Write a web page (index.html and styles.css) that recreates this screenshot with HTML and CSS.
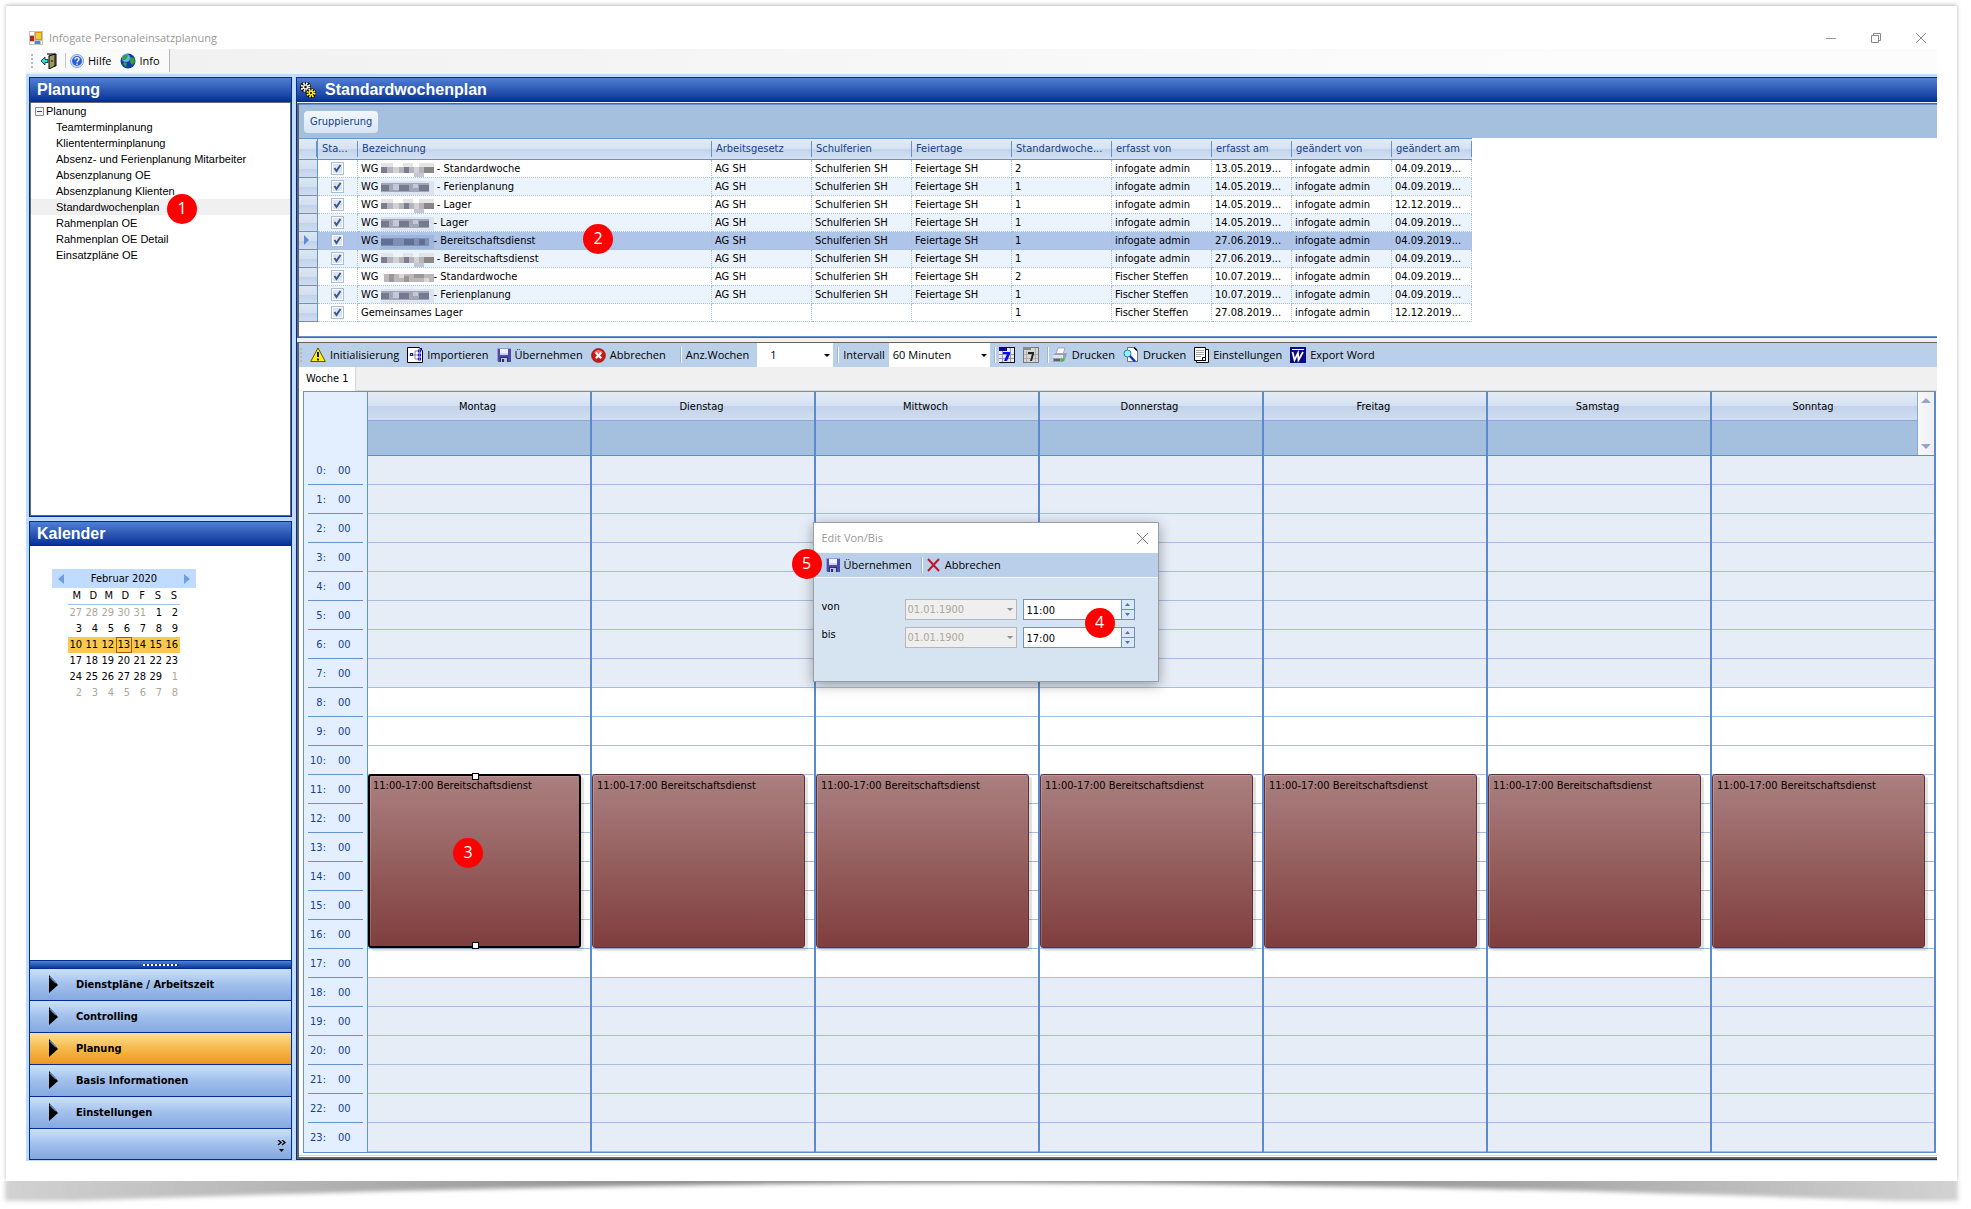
FILE: index.html
```html
<!DOCTYPE html>
<html lang="de">
<head>
<meta charset="utf-8">
<title>Infogate Personaleinsatzplanung</title>
<link rel="stylesheet" href="styles.css">
</head>
<body>
<svg class="defs" aria-hidden="true">
  <symbol id="i-save" viewBox="0 0 14 14"><path d="M0 0h14v14H1.500L0 12.500z" fill="#4a4aa8"/><path d="M0 0h14v1H1v12H0z" fill="#9a9ade"/><path d="M3 1h8v6H3z" fill="#eef2ff"/><path d="M3 5h8v2H3z" fill="#cdd4f2"/><path d="M3 9h8v5H3z" fill="#30306e"/><path d="M4 10h6v4H4z" fill="#b9c0de"/><path d="M5 11h2v3H5z" fill="#2c2c60"/></symbol>
  <symbol id="i-arrow" viewBox="0 0 11 18"><path d="M1 0v18l9-8z" fill="#000"/><path d="M2 2l6 6" stroke="#5b86b5" stroke-width="1.500"/></symbol>
  <symbol id="m-a" viewBox="0 0 53 14"><g fill="#e4e4e6"><path d="M0 0h12v4H0zM22 0h10v4H22zM38 0h15v4H38z"/></g><path d="M0 4h53v6H0z" fill="#b4b4ba"/><path d="M0 4h6v6H0zM23 4h5v6h-5z" fill="#7d7d92"/><path d="M12 4h6v6h-6zM33 4h5v6h-5z" fill="#d2d2d2"/><path d="M43 4h10v6H43z" fill="#8a8686"/><path d="M33 10h10v4H33z" fill="#c4c6d4"/></symbol>
  <symbol id="m-b" viewBox="0 0 53 14"><path d="M0 0h53v14H0z" fill="#d5dbe6" opacity=".6"/><path d="M0 2h48v9H0z" fill="#a3a6b6"/><path d="M0 4h8v6H0zM18 4h10v6H18zM38 4h10v6H38z" fill="#747a90"/><path d="M12 3h6v6h-6zM32 3h5v4h-5z" fill="#c3c9d8"/></symbol>
  <symbol id="m-c" viewBox="0 0 53 14"><path d="M3 3h50v8H3z" fill="#bab8b8"/><path d="M8 3h5v8H8zM23 5h5v6h-5zM33 3h10v4H33z" fill="#9a9896"/><path d="M18 3h5v4h-5zM43 7h5v4h-5z" fill="#d8d8d8"/></symbol>
  <symbol id="m-d" viewBox="0 0 53 14"><path d="M0 0h53v14H0z" fill="#95abd0" opacity=".6"/><path d="M0 3h48v8H0z" fill="#7d90b4"/><path d="M0 4h12v6H0zM23 4h10v6H23zM38 4h6v6h-6z" fill="#5f7094"/></symbol>
</svg>

<div class="sheet">
  <header class="titlebar">
    <svg width="14" height="14" viewBox="0 0 14 14"><path d="M0 0h14v14H0z" fill="#c4c4c4"/><path d="M1 1h4v3H1zM1 11h4v2H1zM12 10h1v3h-1z" fill="#fff"/><path d="M1 5h4v5H1z" fill="#b02a1c"/><path d="M6 1h7v8H6z" fill="#d99a08"/><path d="M7 2h5v6H7z" fill="#f7c93c"/><path d="M6 10h5v3H6z" fill="#4d86e0"/></svg>
    <h1>Infogate Personaleinsatzplanung</h1>
    <div class="winbtns">
      <button aria-label="Minimieren"><svg width="10" height="10"><path d="M0 5.500h10" stroke="#999"/></svg></button>
      <button aria-label="Wiederherstellen"><svg width="10" height="10" fill="none" stroke="#888"><path d="M.5 2.500h7v7h-7zM2.500 2V.5h7v7H8"/></svg></button>
      <button aria-label="Schliessen"><svg width="10" height="10"><path d="M0 0l10 10M10 0L0 10" stroke="#888"/></svg></button>
    </div>
  </header>

  <nav class="menubar">
    <div class="menu">
      <span class="grip"></span>
      <button aria-label="Beenden"><svg width="16" height="16" viewBox="0 0 16 16"><path d="M6 1h9v12h-2" fill="#c9c9c9" stroke="#000"/><path d="M8 3l6-2v12l-6 3z" fill="#a09a62" stroke="#000"/><path d="M11 7v2" stroke="#000"/><path d="M0 8l4-4v2.500h3v3H4V12z" fill="#2ee0e0" stroke="#000" stroke-width=".7"/></svg></button>
      <span class="sep"></span>
      <button><svg width="14" height="14" viewBox="0 0 14 14"><circle cx="7" cy="7" r="6.500" fill="#dfe8fb" stroke="#7e9ce0"/><circle cx="7" cy="7" r="5" fill="#2b5fd6"/><path d="M5 5.500c0-2.600 4-2.400 4-.2C9 6.800 7 6.700 7 8.500M7 9.500V11" fill="none" stroke="#fff" stroke-width="1.300"/></svg>Hilfe</button>
      <button><svg width="16" height="16" viewBox="0 0 16 16"><circle cx="8" cy="8" r="7.500" fill="#0e3fa4"/><circle cx="6" cy="5" r="4" fill="#5fb4f2"/><path d="M2 5c1-3 4-4 6-3L7 5 5 7 3 7zM10 4l4 1 1 4-3 3-2-3zM4 9l3 1-1 4-3-3z" fill="#3d9c3a"/></svg>Info</button>
    </div>
  </nav>

  <div class="frame">
    <aside class="sidebar">
      <section class="panel tree-panel">
        <h2>Planung</h2>
        <div class="tree">
          <div class="root"><svg width="9" height="9"><path d="M.5.5h8v8h-8z" fill="#f4f4f4" stroke="#8a8a8a"/><path d="M2 4.500h5" stroke="#2b4a9c"/></svg>Planung</div>
          <ul>
            <li><a href="#">Teamterminplanung</a></li>
            <li><a href="#">Kliententerminplanung</a></li>
            <li><a href="#">Absenz- und Ferienplanung Mitarbeiter</a></li>
            <li><a href="#">Absenzplanung OE</a></li>
            <li><a href="#">Absenzplanung Klienten</a></li>
            <li class="current"><a href="#">Standardwochenplan</a><span class="badge b1">1</span></li>
            <li><a href="#">Rahmenplan OE</a></li>
            <li><a href="#">Rahmenplan OE Detail</a></li>
            <li><a href="#">Einsatzpläne OE</a></li>
          </ul>
        </div>
      </section>

      <section class="panel cal-panel">
        <h2>Kalender</h2>
        <div class="month">
          <div class="month-head"><button aria-label="Voriger Monat"><svg width="6" height="10"><path d="M6 0v10L0 5z" fill="#6f9fdc"/></svg></button><span>Februar 2020</span><button aria-label="Nächster Monat"><svg width="6" height="10"><path d="M0 0v10l6-5z" fill="#6f9fdc"/></svg></button></div>
          <table>
            <thead><tr><th>M</th><th>D</th><th>M</th><th>D</th><th>F</th><th>S</th><th>S</th></tr></thead>
            <tbody>
              <tr><td class="o">27</td><td class="o">28</td><td class="o">29</td><td class="o">30</td><td class="o">31</td><td>1</td><td>2</td></tr>
              <tr><td>3</td><td>4</td><td>5</td><td>6</td><td>7</td><td>8</td><td>9</td></tr>
              <tr class="week"><td>10</td><td>11</td><td>12</td><td class="today">13</td><td>14</td><td>15</td><td>16</td></tr>
              <tr><td>17</td><td>18</td><td>19</td><td>20</td><td>21</td><td>22</td><td>23</td></tr>
              <tr><td>24</td><td>25</td><td>26</td><td>27</td><td>28</td><td>29</td><td class="o">1</td></tr>
              <tr><td class="o">2</td><td class="o">3</td><td class="o">4</td><td class="o">5</td><td class="o">6</td><td class="o">7</td><td class="o">8</td></tr>
            </tbody>
          </table>
        </div>
      </section>

      <div class="splitter"><span></span></div>
      <nav class="groups">
        <button><svg width="11" height="18"><use href="#i-arrow"/></svg>Dienstpläne / Arbeitszeit</button>
        <button><svg width="11" height="18"><use href="#i-arrow"/></svg>Controlling</button>
        <button class="active"><svg width="11" height="18"><use href="#i-arrow"/></svg>Planung</button>
        <button><svg width="11" height="18"><use href="#i-arrow"/></svg>Basis Informationen</button>
        <button><svg width="11" height="18"><use href="#i-arrow"/></svg>Einstellungen</button>
        <div class="overflow"><button aria-label="Weitere"><svg width="9" height="13" viewBox="0 0 9 13"><path d="M1 0l3 2.500L1 5M5 0l3 2.500L5 5" fill="none" stroke="#000" stroke-width="1.400"/><path d="M2 9h5l-2.500 3z"/></svg></button></div>
      </nav>
    </aside>

    <main>
      <h2 class="main-title"><svg width="16" height="16" viewBox="0 0 16 16"><circle cx="5.500" cy="5" r="4" fill="none" stroke="#000" stroke-width="3"/><circle cx="5.500" cy="5" r="3.600" fill="none" stroke="#f2f2e6" stroke-width="2.600" stroke-dasharray="1.700 1.130"/><circle cx="5.500" cy="5" r="2.600" fill="#f2f2e6"/><circle cx="5.500" cy="5" r="1.200"/><circle cx="11" cy="11" r="3.600" fill="none" stroke="#000" stroke-width="3"/><circle cx="11" cy="11" r="3.300" fill="none" stroke="#ffee20" stroke-width="2.600" stroke-dasharray="1.500 1.090"/><circle cx="11" cy="11" r="2.400" fill="#ffee20"/><circle cx="11" cy="11" r="1.100"/></svg>Standardwochenplan</h2>

      <section class="plans">
        <div class="groupbar"><button>Gruppierung</button></div>
        <table class="grid">
          <colgroup><col class="w20"><col class="w40"><col class="w354"><col class="w100"><col class="w100"><col class="w100"><col class="w100"><col class="w100"><col class="w80"><col class="w100"><col class="w80"></colgroup>
          <thead><tr><th></th><th>Sta...</th><th>Bezeichnung</th><th>Arbeitsgesetz</th><th>Schulferien</th><th>Feiertage</th><th>Standardwoche...</th><th>erfasst von</th><th>erfasst am</th><th>geändert von</th><th>geändert am</th></tr></thead>
          <tbody>
            <tr><td></td><td><input type="checkbox" checked aria-label="Aktiv"></td><td>WG <svg width="53" height="14"><use href="#m-a"/></svg> - Standardwoche</td><td>AG SH</td><td>Schulferien SH</td><td>Feiertage SH</td><td>2</td><td>infogate admin</td><td>13.05.2019...</td><td>infogate admin</td><td>04.09.2019...</td></tr>
            <tr><td></td><td><input type="checkbox" checked aria-label="Aktiv"></td><td>WG <svg width="53" height="14"><use href="#m-b"/></svg> - Ferienplanung</td><td>AG SH</td><td>Schulferien SH</td><td>Feiertage SH</td><td>1</td><td>infogate admin</td><td>14.05.2019...</td><td>infogate admin</td><td>04.09.2019...</td></tr>
            <tr><td></td><td><input type="checkbox" checked aria-label="Aktiv"></td><td>WG <svg width="53" height="14"><use href="#m-a"/></svg> - Lager</td><td>AG SH</td><td>Schulferien SH</td><td>Feiertage SH</td><td>1</td><td>infogate admin</td><td>14.05.2019...</td><td>infogate admin</td><td>12.12.2019...</td></tr>
            <tr><td></td><td><input type="checkbox" checked aria-label="Aktiv"></td><td>WG <svg width="53" height="14"><use href="#m-b"/></svg>- Lager</td><td>AG SH</td><td>Schulferien SH</td><td>Feiertage SH</td><td>1</td><td>infogate admin</td><td>14.05.2019...</td><td>infogate admin</td><td>04.09.2019...</td></tr>
            <tr class="sel"><td><svg width="5" height="10"><path d="M0 0v10l5-5z" fill="#5a8fd8"/></svg></td><td><input type="checkbox" checked aria-label="Aktiv"></td><td>WG <svg width="53" height="14"><use href="#m-d"/></svg>- Bereitschaftsdienst<span class="badge b2">2</span></td><td>AG SH</td><td>Schulferien SH</td><td>Feiertage SH</td><td>1</td><td>infogate admin</td><td>27.06.2019...</td><td>infogate admin</td><td>04.09.2019...</td></tr>
            <tr><td></td><td><input type="checkbox" checked aria-label="Aktiv"></td><td>WG <svg width="53" height="14"><use href="#m-a"/></svg> - Bereitschaftsdienst</td><td>AG SH</td><td>Schulferien SH</td><td>Feiertage SH</td><td>1</td><td>infogate admin</td><td>27.06.2019...</td><td>infogate admin</td><td>04.09.2019...</td></tr>
            <tr><td></td><td><input type="checkbox" checked aria-label="Aktiv"></td><td>WG <svg width="53" height="14"><use href="#m-c"/></svg>- Standardwoche</td><td>AG SH</td><td>Schulferien SH</td><td>Feiertage SH</td><td>2</td><td>Fischer Steffen</td><td>10.07.2019...</td><td>infogate admin</td><td>04.09.2019...</td></tr>
            <tr><td></td><td><input type="checkbox" checked aria-label="Aktiv"></td><td>WG <svg width="53" height="14"><use href="#m-b"/></svg>- Ferienplanung</td><td>AG SH</td><td>Schulferien SH</td><td>Feiertage SH</td><td>1</td><td>Fischer Steffen</td><td>10.07.2019...</td><td>infogate admin</td><td>04.09.2019...</td></tr>
            <tr><td></td><td><input type="checkbox" checked aria-label="Aktiv"></td><td>Gemeinsames Lager</td><td></td><td></td><td></td><td>1</td><td>Fischer Steffen</td><td>27.08.2019...</td><td>infogate admin</td><td>12.12.2019...</td></tr>
          </tbody>
        </table>
      </section>

      <section class="editor">
        <div class="toolbar">
          <span class="grip"></span>
          <button><svg width="16" height="16" viewBox="0 0 16 16"><path d="M8 1L15.300 14.500H.7z" fill="#ffee10" stroke="#5c5600" stroke-linejoin="round"/><path d="M8 5v5M8 11.500v2" stroke="#000" stroke-width="1.800"/></svg>Initialisierung</button>
          <button><svg width="16" height="16" viewBox="0 0 16 16"><path d="M.5.5h12l3 3v12H.5z" fill="#fff" stroke="#000"/><path d="M12 1l3 3v-3z" fill="#000"/><path d="M6 8h5M8 4h3M8 12h3M8 4v8" stroke="#888" fill="none"/><path d="M3.500 6.500h2v2h-2zM11.500 3h2v2h-2zM11.500 7h2v2h-2zM11.500 11h2v2h-2z" fill="#fff" stroke="#1414e0" stroke-width="1.200"/></svg>Importieren</button>
          <button><svg width="14" height="14"><use href="#i-save"/></svg>Übernehmen</button>
          <button><svg width="15" height="15" viewBox="0 0 15 15"><circle cx="7.500" cy="7.500" r="7" fill="#c81a14" stroke="#8c100c" stroke-width=".6"/><path d="M3 5c2-4 7-4 9 0" fill="#ea7268"/><path d="M4.800 4.800l5.400 5.400M10.200 4.800l-5.400 5.400" stroke="#fff" stroke-width="2.200"/></svg>Abbrechen</button>
          <span class="sep wide"></span>
          <label for="weeks">Anz.Wochen</label>
          <span class="combo weeks"><select id="weeks"><option>1</option></select></span>
          <span class="sep"></span>
          <label for="interval">Intervall</label>
          <span class="combo interval"><select id="interval"><option>60 Minuten</option></select></span>
          <span class="sep"></span>
          <button aria-label="Wochenansicht"><svg width="16" height="16" viewBox="0 0 16 16"><path d="M0 0h16v16H0z" fill="#111"/><path d="M0 1h15v14H0z" fill="#e8e8f0"/><path d="M0 1h8v3H0z" fill="#0a0a90"/><path d="M0 7.500h15M0 11.500h15M3.500 4v11M11.500 1v14" stroke="#9a9aa4"/><path d="M4 5h7v2L8 14H5l3-7H4z" fill="#0c0cf0"/></svg></button>
          <button aria-label="Tagesansicht"><svg width="16" height="16" viewBox="0 0 16 16"><path d="M0 0h16v16H0z" fill="#777"/><path d="M1 1h14v14H1z" fill="#d6d6d2"/><path d="M0 0h8v3H0z" fill="#8a8a8a"/><path d="M1 7.500h14M1 11.500h14M3.500 4v11M12.500 1v14" stroke="#b0b0ae"/><path d="M5 5h6v2l-2 7H7l2-7H5z" fill="#222"/></svg></button>
          <span class="sep"></span>
          <button><svg width="16" height="16" viewBox="0 0 16 16"><path d="M6 1h7l-2 6H4z" fill="#fff" stroke="#8a94a8" stroke-width=".7"/><path d="M1 8l3-2h11l-2 7-2 2H1z" fill="#9aa0ae"/><path d="M1 8h10v3H1z" fill="#dfe3ea"/><path d="M2 12h6v2H2z" fill="#5a5f6c"/><path d="M9 12h3v2H9z" fill="#2cc82c"/></svg>Drucken</button>
          <button><svg width="16" height="16" viewBox="0 0 16 16"><path d="M4.500.5h7l3 3v11h-10z" fill="#fff" stroke="#555" stroke-width=".8"/><path d="M11 .5l3 3" stroke="#000" stroke-width="1.500"/><circle cx="4.500" cy="6.500" r="3.500" fill="#8ef2f6" stroke="#2a7f94"/><path d="M7 9l5 5.500" stroke="#0e2fd0" stroke-width="2.600"/></svg>Drucken</button>
          <button><svg width="15" height="16" viewBox="0 0 15 16"><path d="M2.500 2.500h12v13h-12z" fill="#fff" stroke="#000"/><path d="M.5.5h11v13H.5z" fill="#fff" stroke="#000"/><path d="M2 3.500h8M2 5.500h8M2 7.500h8M2 9.500h5" stroke="#aaa"/><path d="M8.500 10.500h3v3h-3z" fill="#fff" stroke="#000"/></svg>Einstellungen</button>
          <button><svg width="16" height="16" viewBox="0 0 16 16"><path d="M0 0h16v16H0z" fill="#0a0a84"/><path d="M2 2.500h12" stroke="#fff"/><path d="M2.500 5l2 8L8 6l.5 7L13 5" fill="none" stroke="#fff" stroke-width="1.700"/></svg>Export Word</button>
        </div>
        <div class="tabs"><button>Woche 1</button></div>

        <div class="scheduler">
          <div class="times">
            <div class="corner"></div>
            <ol>
              <li><b>0:</b>00</li><li><b>1:</b>00</li><li><b>2:</b>00</li><li><b>3:</b>00</li><li><b>4:</b>00</li><li><b>5:</b>00</li><li><b>6:</b>00</li><li><b>7:</b>00</li><li><b>8:</b>00</li><li><b>9:</b>00</li><li><b>10:</b>00</li><li><b>11:</b>00</li><li><b>12:</b>00</li><li><b>13:</b>00</li><li><b>14:</b>00</li><li><b>15:</b>00</li><li><b>16:</b>00</li><li><b>17:</b>00</li><li><b>18:</b>00</li><li><b>19:</b>00</li><li><b>20:</b>00</li><li><b>21:</b>00</li><li><b>22:</b>00</li><li><b>23:</b>00</li>
            </ol>
          </div>
          <div class="day"><div class="dayhead"><h3>Montag</h3></div><div class="hours"><article class="event picked">11:00-17:00 Bereitschaftsdienst<span class="badge b3">3</span></article></div></div>
          <div class="day"><div class="dayhead"><h3>Dienstag</h3></div><div class="hours"><article class="event">11:00-17:00 Bereitschaftsdienst</article></div></div>
          <div class="day"><div class="dayhead"><h3>Mittwoch</h3></div><div class="hours"><article class="event">11:00-17:00 Bereitschaftsdienst</article></div></div>
          <div class="day"><div class="dayhead"><h3>Donnerstag</h3></div><div class="hours"><article class="event">11:00-17:00 Bereitschaftsdienst</article></div></div>
          <div class="day"><div class="dayhead"><h3>Freitag</h3></div><div class="hours"><article class="event">11:00-17:00 Bereitschaftsdienst</article></div></div>
          <div class="day"><div class="dayhead"><h3>Samstag</h3></div><div class="hours"><article class="event">11:00-17:00 Bereitschaftsdienst</article></div></div>
          <div class="day"><div class="dayhead"><h3>Sonntag</h3><div class="scroll"><button aria-label="Nach oben"><svg width="10" height="5"><path d="M0 5h10L5 0z" fill="#97a5cc"/></svg></button><button aria-label="Nach unten"><svg width="10" height="5"><path d="M0 0h10L5 5z" fill="#97a5cc"/></svg></button></div></div><div class="hours"><article class="event">11:00-17:00 Bereitschaftsdienst</article></div></div>
        </div>
      </section>
    </main>
  </div>
</div>

<svg class="curl" viewBox="0 0 1971 29" preserveAspectRatio="none" aria-hidden="true">
  <defs>
    <linearGradient id="cg"><stop offset="0" stop-color="#d2d2d2"/><stop offset=".15" stop-color="#b4b4b4"/><stop offset=".35" stop-color="#8c8c8c"/><stop offset=".65" stop-color="#8c8c8c"/><stop offset=".85" stop-color="#b4b4b4"/><stop offset="1" stop-color="#d2d2d2"/></linearGradient>
    <filter id="cb" x="-1%" y="-30%" width="102%" height="160%"><feGaussianBlur stdDeviation="2"/></filter>
  </defs>
  <path d="M5 -6H1958V20H1900Q1400 2 985 2T71 20H5z" fill="url(#cg)" filter="url(#cb)"/>
</svg>

<div class="dialog" role="dialog" aria-labelledby="dlg">
  <div class="dialog-title"><h2 id="dlg">Edit Von/Bis</h2><button aria-label="Schliessen"><svg width="11" height="11"><path d="M0 0l11 11M11 0L0 11" stroke="#777"/></svg></button></div>
  <div class="dialog-tools">
    <button><svg width="14" height="14"><use href="#i-save"/></svg>Übernehmen</button>
    <span class="sep"></span>
    <button><svg width="13" height="14" viewBox="0 0 13 14"><path d="M1 1l11 12M12 1L1 13" stroke="#c4142c" stroke-width="2"/></svg>Abbrechen</button>
  </div>
  <form>
    <label for="von">von</label>
    <span class="combo date"><select disabled aria-label="Datum von"><option>01.01.1900</option></select></span>
    <span class="spin"><input id="von" value="11:00"><span><button type="button" aria-label="Später"><svg width="5" height="3"><path d="M0 3h5L2.500 0z"/></svg></button><button type="button" aria-label="Früher"><svg width="5" height="3"><path d="M0 0h5L2.500 3z"/></svg></button></span></span>
    <label for="bis">bis</label>
    <span class="combo date"><select disabled aria-label="Datum bis"><option>01.01.1900</option></select></span>
    <span class="spin"><input id="bis" value="17:00"><span><button type="button" aria-label="Später"><svg width="5" height="3"><path d="M0 3h5L2.500 0z"/></svg></button><button type="button" aria-label="Früher"><svg width="5" height="3"><path d="M0 0h5L2.500 3z"/></svg></button></span></span>
  </form>
  <span class="badge b4">4</span>
  <span class="badge b5">5</span>
</div>
</body>
</html>
```
FILE: styles.css
```css
:root {
  --navy: #002d96;
  --line: #6593cf;
  --soft: #a5bfe1;
  --ui: "Open Sans", "Noto Sans", sans-serif;
  --tahoma: "DejaVu Sans Condensed", "DejaVu Sans", sans-serif;
}
* { box-sizing: border-box; }
body {
  margin: 0;
  padding: 6px 14px 0 6px;
  background: #fff;
  color: #000;
  font: 11px/14px var(--tahoma);
  position: relative;
}
h1, h2, h3, ul, ol { margin: 0; padding: 0; font-weight: normal; font-size: inherit; list-style: none; }
button, select, input { font: inherit; color: inherit; margin: 0; padding: 0; border: 0; background: none; border-radius: 0; }
button { display: flex; align-items: center; gap: 4px; white-space: nowrap; }
svg { display: block; flex: none; }
.defs { position: absolute; width: 0; height: 0; }

.sheet { position: relative; z-index: 1; padding: 20px; background: #fff; box-shadow: 0 -1px 4px rgba(0,0,0,.28); clip-path: inset(-6px -6px 0 -6px); }

.titlebar { display: flex; align-items: center; gap: 6px; height: 23px; padding-left: 3px; color: #999; font: 11px/16px var(--ui); }
.winbtns { display: flex; gap: 35px; margin-left: auto; padding-right: 11px; }

.menubar { height: 25px; background: linear-gradient(90deg, #f0f0f0, #fcfcfc 80%); font: 11px/16px var(--ui); }
.menu { display: flex; align-items: center; gap: 8px; width: 144px; height: 23px; padding-left: 5px; background: #fafafa; border-right: 1px solid #b8b8b8; }
.grip { width: 2px; height: 14px; background: repeating-linear-gradient(#b8b8b8 0 2px, transparent 2px 4px); }
.menu .sep { width: 1px; height: 15px; background: #c4c4c4; }
.menu .sep + button { margin-left: -4px; }

.frame { display: flex; gap: 4px; padding: 3px 0 1px 3px; background: #bfdbff; }

.sidebar { display: flex; flex-direction: column; flex: 0 0 263px; }
.panel { border: 1px solid var(--navy); background: #fff; }
.panel h2, .main-title { height: 24px; padding-left: 7px; color: #fff; font: bold 16px/23px "Liberation Sans", Arial, sans-serif; background: linear-gradient(#5080d2, #1c46a6 75%, #04309a); border-bottom: 1px solid var(--navy); }
.tree-panel { display: flex; flex-direction: column; min-height: 440px; margin-bottom: 4px; }
.tree { flex: 1; border: 1px solid #696969; font: 11px/16px "Liberation Sans", Arial, sans-serif; }
.root { display: flex; align-items: center; gap: 2px; padding-left: 4px; }
.tree li { position: relative; height: 16px; padding-left: 25px; }
.tree a { color: inherit; text-decoration: none; }
.tree .current { background: #f0f0f0; }

.cal-panel { flex: 1; }
.month { width: 144px; margin: 23px 0 0 22px; }
.month-head { display: flex; align-items: center; justify-content: space-between; height: 19px; padding: 0 6px; line-height: 16px; background: #bfdbff; }
.month table { width: 112px; margin-left: 16px; border-collapse: separate; border-spacing: 0; table-layout: fixed; }
.month th, .month td { height: 16px; padding: 0 2px 0 0; text-align: right; font-weight: normal; line-height: 16px; }
.month th { height: 17px; border-bottom: 1px solid #9ebff0; padding-right: 3px; }
.month .o { color: #aca899; }
.month .week { background: #fbc84f; }
.month .today { outline: 1px solid #bb5503; outline-offset: -1px; }

.splitter { display: flex; justify-content: center; align-items: center; height: 8px; background: linear-gradient(#5080d2, #0c389c); border: solid var(--navy); border-width: 0 1px 1px; }
.splitter span { width: 36px; height: 2px; background: repeating-linear-gradient(90deg, #fff 0 2px, #1a3a80 2px 4px); }
.groups { border: solid var(--navy); border-width: 0 1px; }
.groups > * { display: flex; width: 100%; height: 32px; border-bottom: 1px solid var(--navy); background: linear-gradient(#cbe1fb, #a2c0ec 50%, #84a8e0); }
.groups > button { gap: 17px; padding-left: 18px; font-weight: bold; }
.groups > button svg { margin-bottom: 2px; }
.groups > .active { background: linear-gradient(#fbe090, #f5b94d 50%, #ee971f); }
.groups > .overflow { height: 31px; justify-content: flex-end; align-items: center; padding: 4px 5px 0 0; }

main { flex: 1; min-width: 0; border: solid var(--navy); border-width: 1px 0 1px 1px; background: #f0f0f0; }
.main-title { display: flex; align-items: center; gap: 9px; padding-left: 3px; }

.plans { margin-top: 1px; padding-bottom: 1px; border: solid #646464; border-width: 1px 0 1px 2px; background: linear-gradient(var(--line), var(--line)) bottom / 100% 1px no-repeat #fff; }
.groupbar { height: 34px; padding: 6px 5px; background: #a5bfdf; border-top: 1px solid var(--line); }
.groupbar button { height: 22px; padding: 0 6px; border-radius: 4px; color: #15428b; background: linear-gradient(#f2f7fd, #d8e4f4); }
.grid { width: 1173px; margin-bottom: 14px; border-collapse: separate; border-spacing: 0; table-layout: fixed; }
.w20 { width: 19px; } .w40 { width: 40px; } .w80 { width: 80px; } .w100 { width: 100px; } .w354 { width: 354px; }
.grid th { height: 22px; padding: 0 0 0 4px; color: #15428b; font-weight: normal; text-align: left; border: solid var(--line); border-width: 1px 0; background: linear-gradient(var(--line), var(--line)) right / 1px 16px no-repeat, linear-gradient(#e3ebf5, #d6e2f2 50%, #c3d4ec 51%, #d5e1f2); }
.grid th:first-child, .grid td:first-child { border-right: 1px solid var(--line); }
.grid td { height: 18px; padding: 0 0 0 3px; line-height: 17px; white-space: nowrap; border-bottom: 1px dotted var(--soft); border-right: 1px dotted var(--soft); }
.grid td svg { display: inline-block; margin-left: -1px; vertical-align: -3px; }
.grid td:nth-child(3) svg { height: 14px; margin-top: -2px; margin-bottom: -2px; }
.grid td:first-child { padding-left: 6px; border-bottom: 1px solid var(--line); background: linear-gradient(#dbe6f4, #d3dff0 50%, #c0d2eb 51%, #cfdcef); }
.grid td:first-child svg { vertical-align: -1px; }
.grid td:nth-child(2) { padding: 0; text-align: center; }
.grid td:nth-child(3) { position: relative; }
.grid tbody tr:nth-child(even) { background: #ebf3fd; }
.grid tbody tr.sel { background: #aec4e9; }
.grid input { appearance: none; display: block; width: 13px; height: 13px; margin: 0 auto; border: 1px solid #a9bdda; background: url("data:image/svg+xml,%3Csvg xmlns='http://www.w3.org/2000/svg' viewBox='0 0 11 11'%3E%3Cpath d='M1 1h9v9H1z' fill='%23dfe5ee'/%3E%3Cpath d='M2.500 5l2 3 4-6' fill='none' stroke='%233a5a94' stroke-width='2'/%3E%3C/svg%3E") #fff; }

.editor { margin-top: 4px; padding-bottom: 4px; border: solid #646464; border-width: 1px 0 2px 2px; background: linear-gradient(#d4d4d4, #d4d4d4) 0 calc(100% - 1px) / 100% 1px no-repeat #fff; }
.toolbar { display: flex; align-items: center; gap: 8px; height: 24px; padding-left: 1px; background: #bad0ea; font: 11px/16px var(--ui); }
.toolbar .sep, .dialog-tools .sep { width: 2px; height: 16px; background: linear-gradient(90deg, #9cb4d6 50%, #fff 50%); }
.toolbar .sep.wide { margin-left: 6px; }
.toolbar .sep + button { margin-left: -5px; }
.toolbar label { margin: 0 -4px; }
.combo { display: flex; align-items: center; position: relative; height: 24px; background: #fff; }
.combo::after { content: ""; position: absolute; right: 3px; border: solid transparent; border-width: 3px 3px 0; border-top-color: #000; pointer-events: none; }
.combo select { appearance: none; width: 100%; height: 100%; padding-left: 4px; }
.combo.weeks { width: 76px; margin: 0 -4px 0 4px; }
.combo.weeks select { padding-left: 13px; }
.combo.interval { width: 101px; margin-right: -4px; }

.tabs { height: 24px; background: #f0f0f0; border-bottom: 1px solid #d9d9d9; }
.tabs button { height: 24px; width: 57px; padding: 0 0 0 7px; background: #fff; border-right: 1px solid #d9d9d9; }

.scheduler { display: grid; grid-template-columns: 65px repeat(7, 1fr); margin: 0 1px 0 4px; border-top: 1px solid var(--line); border-bottom: 1px solid #5b8bcb; }
.times { border: solid var(--line); border-width: 0 1px; background: #e3efff; color: #15428b; }
.corner { height: 64px; }
.times li { display: grid; grid-template-columns: 18px 1fr; gap: 12px; height: 29px; margin: 0 4px; line-height: 30px; border-bottom: 1px solid var(--line); }
.times li:last-child { border-color: transparent; }
.times b { font-weight: normal; text-align: right; }
.day { min-width: 0; border-right: 2px solid #5b8bcb; }
.dayhead { display: grid; grid-template-columns: 1fr auto; grid-template-rows: 29px 34px; border-bottom: 1px solid #5b8bcb; background: #a5bfdf; }
.dayhead h3 { height: 29px; padding-right: 3px; text-align: center; line-height: 30px; border-bottom: 1px solid #8aa9d8; background: linear-gradient(#e4ecf6, #d4e0f1 50%, #c1d2eb 51%, #d2deef); }
.scroll { grid-row: 1 / 3; grid-column: 2; display: flex; flex-direction: column; justify-content: space-between; width: 17px; padding: 6px 3px; border-left: 1px solid #8aa9d8; background: linear-gradient(90deg, #f8f8f8, #eef0f2); }
.hours { display: grid; grid-template-rows: repeat(24, 29px); background: repeating-linear-gradient(transparent 0 28px, var(--soft) 28px 29px), linear-gradient(#e6edf7 232px, #fff 232px 522px, #e6edf7 522px); }
.event { position: relative; grid-row: 12 / 18; margin: -1px 9px 1px 0; padding: 4px; border: 1px solid #5e3236; border-radius: 3px; white-space: nowrap; background: linear-gradient(#ab8080, #803e3e); box-shadow: 3px 3px 1px rgba(0,0,0,.12), inset 1px 1px 0 rgba(255,255,255,.18); }
.event.picked { padding: 3px; border: 2px solid #000; }
.event.picked::before, .event.picked::after { content: ""; position: absolute; left: calc(50% - 3px); width: 5px; height: 5px; border: 1px solid #000; background: #fff; }
.event.picked::before { top: -3px; }
.event.picked::after { bottom: -3px; }

.badge { position: absolute; z-index: 2; width: 30px; height: 30px; border-radius: 50%; background: #f00; color: #fff; font: 16px/29px var(--ui); text-align: center; }
.b1 { left: 136px; top: -5px; }
.b2 { left: 225px; top: -8px; }
.b3 { left: 83px; top: 62px; }
.b4 { left: 271px; top: 85px; }
.b5 { left: -22px; top: 26px; }

.curl { display: block; width: calc(100% + 20px); height: 29px; margin: 0 -14px 0 -6px; overflow: hidden; }

.dialog { position: absolute; z-index: 2; top: 522px; left: 0; right: 0; width: 346px; height: 160px; margin: 0 auto; border: 1px solid #9aa0a8; background: #d6e4f2; box-shadow: 0 3px 12px rgba(0,0,0,.35); }
.dialog-title { display: flex; align-items: center; justify-content: space-between; height: 30px; padding: 0 10px 0 8px; background: #fff; color: #999; font: 11px/16px var(--ui); }
.dialog-tools { display: flex; align-items: center; gap: 9px; height: 25px; padding-left: 12px; background: #bad0ea; border-bottom: 1px solid #f0f6fc; font: 11px/16px var(--ui); }
.dialog-tools .sep + button { margin-left: -5px; gap: 5px; }
.dialog form { display: grid; grid-template-columns: 77px 112px 112px; gap: 7px 6px; padding: 21px 0 0 8px; line-height: 16px; }
.dialog form .combo, .spin { height: 21px; }
.combo.date { border: 1px solid #b4b8bc; background: #efefef; color: #aca899; }
.combo.date::after { border-top-color: #8c8c8c; }
.combo.date select { padding: 1px 0 0 2px; opacity: 1; }
.spin { display: flex; border: 1px solid var(--line); background: #fff; }
.spin input { flex: 1; min-width: 0; padding: 2px 0 0 3px; }
.spin > span { display: grid; width: 13px; border-left: 1px solid var(--line); background: #dbe8f8; }
.spin button { justify-content: center; fill: #4a74b4; }
.spin button + button { border-top: 1px solid var(--line); }
```
